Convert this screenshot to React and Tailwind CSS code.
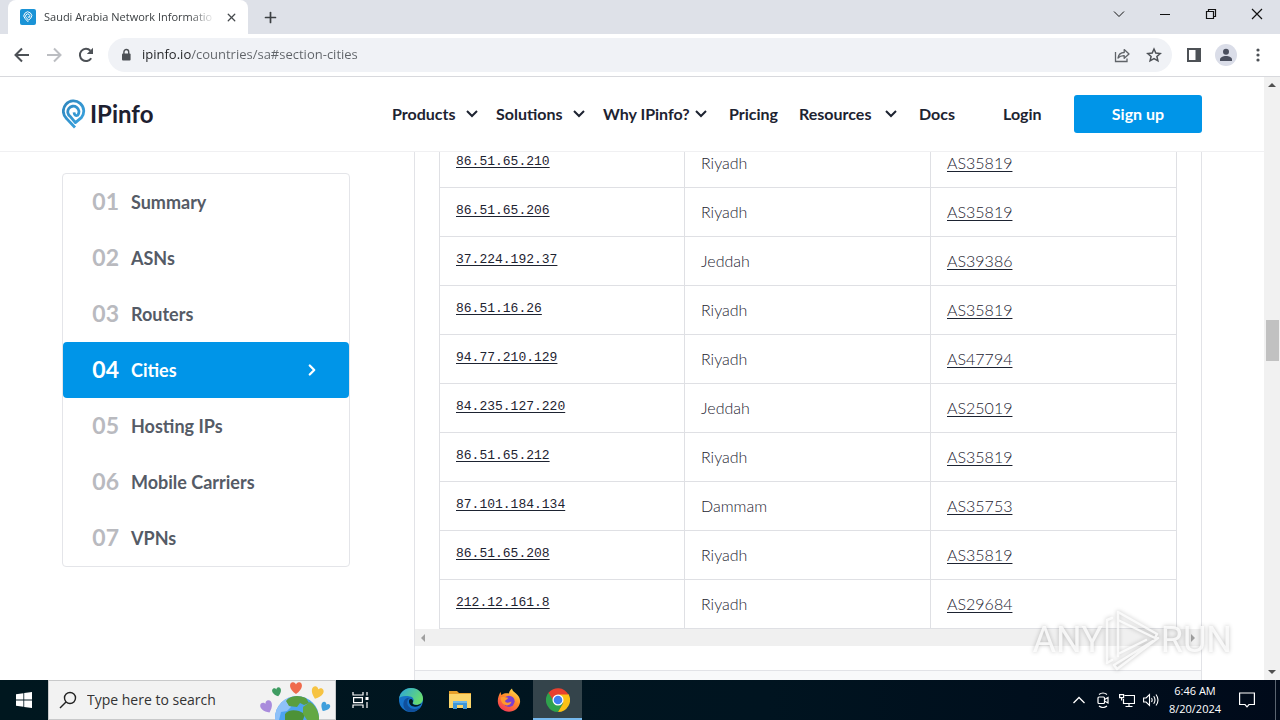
import { useState } from 'react';
import { ChevronRight, Plus, X } from 'lucide-react';

const NAV = [
    { label: 'Products', menu: true, size: 'w-[104px] pr-[18px]' },
    { label: 'Solutions', menu: true, size: 'w-[107px] pr-[18px]' },
    { label: 'Why IPinfo?', menu: true, size: 'w-[126px] pr-[22px]' },
    { label: 'Pricing', menu: false, size: 'w-[70px]' },
    { label: 'Resources', menu: true, size: 'w-[120px] pr-[22px]' },
    { label: 'Docs', menu: false, size: 'w-[84px]' },
    { label: 'Login', menu: false, size: 'w-[71px]' },
];

const SECTIONS = ['Summary', 'ASNs', 'Routers', 'Cities', 'Hosting IPs', 'Mobile Carriers', 'VPNs'];

const ROWS = [
    { ip: '86.51.65.210', city: 'Riyadh', asn: 'AS35819' },
    { ip: '86.51.65.206', city: 'Riyadh', asn: 'AS35819' },
    { ip: '37.224.192.37', city: 'Jeddah', asn: 'AS39386' },
    { ip: '86.51.16.26', city: 'Riyadh', asn: 'AS35819' },
    { ip: '94.77.210.129', city: 'Riyadh', asn: 'AS47794' },
    { ip: '84.235.127.220', city: 'Jeddah', asn: 'AS25019' },
    { ip: '86.51.65.212', city: 'Riyadh', asn: 'AS35819' },
    { ip: '87.101.184.134', city: 'Dammam', asn: 'AS35753' },
    { ip: '86.51.65.208', city: 'Riyadh', asn: 'AS35819' },
    { ip: '212.12.161.8', city: 'Riyadh', asn: 'AS29684' },
];

const PIN = 'M13 28.5 L4.6 19.6 A10.2 10.2 0 1 1 19.4 18.6 L13.4 23.6 L8.2 17.4 A5.6 5.6 0 1 1 15.8 16.2 Q12.6 17.6 12 13.4';

function TabStrip() {
    return (
        <div className="flex h-[34px] shrink-0 items-end bg-[#dee1e8] pl-2">
            <div className="flex h-[34px] w-60 items-center rounded-t-lg bg-white pl-3 pr-2">
                <svg viewBox="0 0 16 16" className="size-4 shrink-0">
                    <rect width="16" height="16" rx="2" fill="#1a93d6" />
                    <g transform="translate(3.4 2.2) scale(0.38)">
                        <path d={PIN} fill="none" stroke="#fff" strokeWidth="2.6" />
                    </g>
                </svg>
                <span className="ml-2 w-[171px] whitespace-nowrap text-[11px] text-[#3c4043] [mask-image:linear-gradient(90deg,#000_85%,transparent)]">Saudi Arabia Network Informatio</span>
                <button aria-label="Close tab" className="ml-2 flex size-4 items-center justify-center text-[#45494d]">
                    <X size={13} strokeWidth={2.4} />
                </button>
            </div>
            <button aria-label="New tab" className="ml-3 flex h-[34px] w-5 items-center justify-center text-[#3c4043]">
                <Plus size={17} strokeWidth={2.4} />
            </button>
            <div className="ml-auto flex h-7 self-start text-[#111]">
                <button aria-label="Search tabs" className="flex w-[46px] items-center justify-center">
                    <svg viewBox="0 0 12 12" className="size-3" fill="none" stroke="currentColor"><path d="M1 3.5l5 5 5-5" /></svg>
                </button>
                <button aria-label="Minimize" className="flex w-[46px] items-center justify-center">
                    <svg viewBox="0 0 12 12" className="size-3" stroke="currentColor"><path d="M1 6.5h10" /></svg>
                </button>
                <button aria-label="Restore" className="flex w-[46px] items-center justify-center">
                    <svg viewBox="0 0 12 12" className="size-3" fill="none" stroke="currentColor" strokeWidth="1.2"><path d="M1.5 3.5h7v7h-7zM3.5 3.5v-2h7v7h-2" /></svg>
                </button>
                <button aria-label="Close" className="flex w-[46px] items-center justify-center">
                    <svg viewBox="0 0 12 12" className="size-3" stroke="currentColor" strokeWidth="1.2"><path d="M1 1l10 10M11 1L1 11" /></svg>
                </button>
            </div>
        </div>
    );
}

function Toolbar() {
    return (
        <div className="flex h-[43px] shrink-0 items-center border-b border-[#d8d9dd] bg-white pl-3 text-[#5f6368]">
            <button aria-label="Back" className="flex size-5 items-center justify-center">
                <svg viewBox="0 0 16 16" className="size-4" fill="none" stroke="#4d5156" strokeWidth="2"><path d="M15 8H2M8 1.5L1.5 8 8 14.5" /></svg>
            </button>
            <button aria-label="Forward" className="ml-3 flex size-5 items-center justify-center">
                <svg viewBox="0 0 16 16" className="size-4" fill="none" stroke="#bcbec2" strokeWidth="2"><path d="M1 8h13M8 1.5L14.5 8 8 14.5" /></svg>
            </button>
            <button aria-label="Reload" className="ml-3 flex size-5 items-center justify-center">
                <svg viewBox="0 0 16 16" className="size-4" fill="none"><path d="M13.2 11.2A6.1 6.1 0 1 1 12.4 3.7" stroke="#4d5156" strokeWidth="2" /><path d="M15 .8V7H8.8z" fill="#4d5156" /></svg>
            </button>
            <div className="ml-3 flex h-[34px] flex-1 items-center rounded-full bg-[#f0f2f6] pl-3 pr-0.5">
                <svg viewBox="0 0 12 14" className="h-3.5 w-3" fill="none"><rect x="2" y="5.5" width="8.6" height="7" rx="1" fill="#4d5156" /><path d="M3.9 6V3.9a2.4 2.4 0 0 1 4.8 0V6" stroke="#4d5156" strokeWidth="1.4" /></svg>
                <input aria-label="Address" defaultValue="ipinfo.io/countries/sa#section-cities"
                    className="ml-2.5 flex-1 bg-[linear-gradient(90deg,#202124_49px,#5f6368_49px)] bg-clip-text text-[13px] text-transparent outline-none" />
                <button aria-label="Share" className="flex size-8 items-center justify-center">
                    <svg viewBox="0 0 16 16" className="size-4" fill="none" stroke="currentColor" strokeWidth="1.3"><path d="M1.5 5v9.5h11.5v-3" /><path d="M4 11c.6-3.6 2.8-5.4 6.2-5.5V2.6L15 7l-4.8 4.3V8.6C7.5 8.5 5.5 9.3 4 11z" strokeLinejoin="round" /></svg>
                </button>
                <button aria-label="Bookmark this tab" className="flex size-8 items-center justify-center">
                    <svg viewBox="0 0 16 16" className="size-4" fill="none" stroke="#4d5156" strokeWidth="1.5"><path d="M8 2l1.8 4.1 4.4.4-3.3 2.9 1 4.4L8 11.5l-3.9 2.3 1-4.4L1.8 6.5l4.4-.4z" /></svg>
                </button>
            </div>
            <button aria-label="Side panel" className="ml-1.5 flex size-8 items-center justify-center">
                <svg viewBox="0 0 16 16" className="size-4"><path fill="#4d5156" fillRule="evenodd" d="M1 1h14v14H1zM3 3v10h6.500V3z" /></svg>
            </button>
            <button aria-label="Profile" className="flex size-8 items-center justify-center">
                <svg viewBox="0 0 22 22" className="size-[22px]"><circle cx="11" cy="11" r="11" fill="#dadde8" /><circle cx="11" cy="7.7" r="3" fill="#4a4f5e" /><path d="M5 17v-1.500c0-2.400 3-3.600 6-3.600s6 1.200 6 3.600V17z" fill="#4a4f5e" /></svg>
            </button>
            <button aria-label="Menu" className="mr-1.5 flex size-8 items-center justify-center">
                <svg viewBox="0 0 4 14" className="h-3.5 w-1" fill="#4d5156"><circle cx="2" cy="2" r="1.6" /><circle cx="2" cy="7" r="1.6" /><circle cx="2" cy="12" r="1.6" /></svg>
            </button>
        </div>
    );
}

function SiteHeader() {
    return (
        <header className="h-[75px] shrink-0 border-b border-[#f0f0f2] bg-white">
            <div className="mx-auto flex h-full max-w-[1140px] items-center">
                <a href="#home" className="flex items-center text-[#1d2030]">
                    <svg viewBox="0 0 24 30" className="h-[30px] w-6" fill="none">
                        <defs>
                            <linearGradient id="pin" x1="0" y1="0" x2="1" y2="1">
                                <stop offset="0" stopColor="#2f86bd" />
                                <stop offset="1" stopColor="#3aa5e2" />
                            </linearGradient>
                        </defs>
                        <path d={PIN} stroke="url(#pin)" strokeWidth="2.800" strokeLinejoin="round" />
                    </svg>
                    <span className="ml-1 text-2xl font-bold">IPinfo</span>
                </a>
                <nav className="ml-auto flex items-center text-base font-bold">
                    {NAV.map(n => (
                        <a key={n.label} href={`#${n.label}`} className={`flex items-center justify-between whitespace-nowrap ${n.size}`}>
                            {n.label}
                            {n.menu && <svg viewBox="0 0 12 8" className="h-2 w-3" fill="none" stroke="currentColor" strokeWidth="2"><path d="M1 1l5 5 5-5" /></svg>}
                        </a>
                    ))}
                    <a href="#signup" className="flex h-[38px] w-32 items-center justify-center rounded-[3px] bg-[#0095e8] text-white">Sign up</a>
                </nav>
            </div>
        </header>
    );
}

function SectionMenu() {
    const [active, setActive] = useState('Cities');

    return (
        <nav className="mt-[21px] w-72 shrink-0 self-start rounded border border-[#e4e5e9] text-lg font-bold">
            {SECTIONS.map((name, i) => (
                <a key={name} href={`#section-${name}`} onClick={() => setActive(name)}
                    className={`flex h-14 items-center rounded pr-7 ${active === name ? 'bg-[#0095e8] text-white' : 'text-[#555b66]'}`}>
                    <span className={`w-14 text-right text-[23px] ${active === name ? '' : 'text-[#b9babf]'}`}>0{i + 1}</span>
                    <span className="ml-3">{name}</span>
                    {active === name && <ChevronRight size={18} strokeWidth={3} className="ml-auto" />}
                </a>
            ))}
        </nav>
    );
}

function IpTable() {
    return (
        <section className="flex min-w-0 flex-1 flex-col border-x border-[#e2e3e7]">
            {/* scrolled a little under the header */}
            <div className="-mt-[13px] px-6">
                <table className="w-full table-fixed border-separate border-spacing-0">
                    <tbody>
                        {ROWS.map(r => (
                            <tr key={r.ip} className="h-[49px] [&>td]:border-b [&>td]:border-r [&>td]:border-[#dfe0e4] [&>td]:px-4">
                                <td className="border-l pb-0.5 font-['Liberation_Mono',monospace] text-[13px]"><a href={`#${r.ip}`} className="underline underline-offset-2">{r.ip}</a></td>
                                <td className="text-base font-light">{r.city}</td>
                                <td className="text-base font-light"><a href={`#${r.asn}`} className="underline underline-offset-2">{r.asn}</a></td>
                            </tr>
                        ))}
                    </tbody>
                </table>
            </div>
            <div className="flex h-[17px] items-center justify-between bg-[#f0f0f0] px-1.5">
                <svg viewBox="0 0 4 8" className="h-2 w-1"><path d="M4 0v8L0 4z" fill="#a0a0a0" /></svg>
                <svg viewBox="0 0 4 8" className="h-2 w-1"><path d="M0 0v8l4-4z" fill="#a0a0a0" /></svg>
            </div>
            <div className="mt-6 flex-1 border-t border-[#e2e3e7] bg-[#f8f9fa]" />
        </section>
    );
}

function PageScrollbar() {
    return (
        <div className="flex w-4 shrink-0 flex-col items-center bg-[#f1f1f1] py-1.5">
            <svg viewBox="0 0 8 4" className="h-1 w-2"><path d="M0 4h8L4 0z" fill="#505050" /></svg>
            <div className="flex-[232]" />
            <div className="h-[41px] w-[13px] bg-[#c1c1c1]" />
            <div className="flex-[307]" />
            <svg viewBox="0 0 8 4" className="h-1 w-2"><path d="M0 0h8L4 4z" fill="#505050" /></svg>
        </div>
    );
}

function Watermark() {
    return (
        <div className="pointer-events-none absolute bottom-2 right-12 flex h-16 items-center font-['Roboto',sans-serif] text-4xl text-white/80 [filter:drop-shadow(0_0_2px_rgba(0,0,0,0.3))]">
            <span>ANY</span>
            <svg viewBox="0 0 58 64" className="h-16 w-[58px]" fill="none" stroke="currentColor" strokeWidth="2.5" strokeLinejoin="round" strokeLinecap="round">
                <path d="M9 10L4 12v43l5-3M15 48V4l39 22-2 4L15 12M55 30L14 61l-3-4L50 33M15 46l28-14" />
            </svg>
            <span>RUN</span>
        </div>
    );
}

function Globe() {
    return (
        <svg viewBox="0 0 72 40" className="h-10 w-[72px] shrink-0">
            <defs>
                <clipPath id="world"><circle cx="38" cy="38" r="22" /></clipPath>
                <path id="heart" d="M0 5C-6 1-6-4-3-4.8-1.500-5.200-.4-4 0-3 .4-4 1.500-5.200 3-4.800 6-4 6 1 0 5z" />
            </defs>
            <circle cx="38" cy="38" r="22" fill="#4da3f0" />
            <g clipPath="url(#world)">
                <path d="M14 40l1-12 7-9 9-4-3 7 4 5-4 4-6 1-2 8z" fill="#8fc1f8" />
                <path d="M27 21c5-7 16-6 20-3l3 5-5 2-4-2-3 4-8-1z" fill="#5a9e3f" />
                <path d="M26 34c4-5 10-4 14-3l6 3-2 6H26z" fill="#4d9237" />
                <path d="M44 27l7-5c5 3 8 8 9 14v4H48l-4-6z" fill="#63a843" />
            </g>
            <use href="#heart" transform="translate(37 8) scale(1.200)" fill="#ef6a4c" />
            <use href="#heart" transform="translate(18 12) rotate(-15) scale(.9)" fill="#3f9c62" />
            <use href="#heart" transform="translate(58 13) rotate(20) scale(1.200)" fill="#f6c342" />
            <use href="#heart" transform="translate(8 27) rotate(-25) scale(1.200)" fill="#a98bdc" />
            <use href="#heart" transform="translate(66 27) rotate(30) scale(.9)" fill="#3f9fdc" />
        </svg>
    );
}

function EdgeIcon() {
    return (
        <svg viewBox="0 0 24 24" className="size-6">
            <defs>
                <linearGradient id="edgeTop" x1="0" y1="0" x2="1" y2=".5">
                    <stop offset="0" stopColor="#2aa4de" />
                    <stop offset="1" stopColor="#67dc70" />
                </linearGradient>
            </defs>
            <circle cx="12" cy="12" r="12" fill="#1572c8" />
            <path d="M0 11C1 4 6 0 12 0c7 0 12 5 12 10.500 0 4-3 6.300-6.500 6.300-3 0-4.200-1.300-3.500-2.300 1.500-2 .5-5.500-3-6C6 7.500 1 8 0 11z" fill="url(#edgeTop)" />
            <path d="M9 11.500c-2.500 5 1.500 9.500 6.500 9.500 3 0 5.200-1 6.800-2.500C20 22 16 24 12 24 6 24 3 18 5 13c1-2.300 3.500-3.700 6-3-1 .2-1.600.8-2 1.500z" fill="#10509c" />
            <path d="M10 13c0-2 3-3 4 0 0 1.500-.8 2-.3 2.800 1.500 2 6.500 1.300 8.800-.6-1.500 4.300-12.500 5.600-12.500-2.200z" fill="#021a22" />
        </svg>
    );
}

function FirefoxIcon() {
    return (
        <svg viewBox="0 0 24 24" className="size-6">
            <defs>
                <linearGradient id="fox" x1=".8" y1="0" x2=".2" y2="1">
                    <stop offset="0" stopColor="#ffe14a" />
                    <stop offset=".45" stopColor="#ff8a2a" />
                    <stop offset="1" stopColor="#f5315a" />
                </linearGradient>
            </defs>
            <path d="M3.500 4l.8 3L7 5.500C9 5 11 5 12 5.500c0-2 1.500-4 3-5 .2 2.500 2 3.200 4 5C22 8 23.500 11 23 14.500 22 20 17.500 23.800 12 23.800S1 19.500.8 13.500C.7 10 2 6.500 3.500 4z" fill="url(#fox)" />
            <circle cx="12" cy="13.300" r="5.600" fill="#7a3fd0" />
            <path d="M3.500 9.500c3-1.200 5 0 7.500.2-.2 2-2.500 1.800-3 3.300.8 2.600 4.500 1.600 6.500.6-.5 3.400-4.500 4.800-7.500 3C5 15.500 3.500 12.500 3.500 9.500z" fill="#ff9a2e" />
        </svg>
    );
}

function ChromeIcon() {
    return (
        <svg viewBox="0 0 24 24" className="size-6">
            <path d="M1.600 6A12 12 0 0 0 12 24l5.200-9L12 12V6z" fill="#2fa24c" />
            <path d="M22.400 6A12 12 0 0 1 12 24l5.200-9L12 6z" fill="#fbc116" />
            <path d="M2.500 4.700A12 12 0 0 1 22.400 6.500H12A5.500 5.500 0 0 0 6.800 10z" fill="#e8402f" />
            <path d="M1.600 6L6.800 15 9 8 2.500 4.700z" fill="#2fa24c" />
            <path d="M2.500 4.700L7 12l5-6z" fill="#e8402f" />
            <circle cx="12" cy="12" r="5.500" fill="#fff" />
            <circle cx="12" cy="12" r="4.300" fill="#3f7ff0" />
        </svg>
    );
}

function Taskbar() {
    return (
        <footer className="flex h-10 shrink-0 items-center bg-[linear-gradient(90deg,#00171f,#001420_60%,#000a1a)] text-white">
            <button aria-label="Start" className="flex h-10 w-12 items-center justify-center">
                <svg viewBox="0 0 16 16" className="size-4" fill="#fff"><path d="M0 2.300L7.400 1.200V7.600H0zM8.200 1.100L16 0v7.600H8.200zM0 8.400h7.400v6.400L0 13.700zM8.200 8.400H16V16l-7.800-1.100z" /></svg>
            </button>
            <label className="flex h-10 w-72 items-center border border-[#c8c9ca] bg-[#f2f2f2] pl-2.5 pr-1 text-[#222]">
                <svg viewBox="0 0 18 18" className="size-[18px] shrink-0" fill="none" stroke="#222" strokeWidth="1.400"><circle cx="11" cy="7" r="5.500" /><path d="M7 11l-6 6" /></svg>
                <input aria-label="Search" placeholder="Type here to search" className="ml-2.5 min-w-0 flex-1 text-sm outline-none placeholder:text-[#333]" />
                <Globe />
            </label>
            <button aria-label="Task view" className="flex h-10 w-[50px] items-center justify-center">
                <svg viewBox="0 0 18 18" className="size-[18px]" fill="none" stroke="#fff" strokeWidth="1.200"><path d="M1 1v3h10V1M1 17v-3h10v3M1.600 6.600h8.800v5H1.600zM15 1v3.500M15 11v6" /><path d="M13.500 6h3v3h-3z" fill="#fff" stroke="none" /></svg>
            </button>
            <button aria-label="Edge" className="flex h-10 w-[49px] items-center justify-center"><EdgeIcon /></button>
            <button aria-label="File Explorer" className="flex h-10 w-[49px] items-center justify-center">
                <svg viewBox="0 0 22 20" className="h-5 w-[22px]"><path d="M0 1h8l2 2h12v3H0z" fill="#e6a02a" /><path d="M0 4h22v14H0z" fill="#fbd56a" /><path d="M4 11h14v8h-4v-4H8v4H4z" fill="#3f97d8" /><path d="M4 11h14v2H4z" fill="#6fb8ea" /></svg>
            </button>
            <button aria-label="Firefox" className="flex h-10 w-[49px] items-center justify-center"><FirefoxIcon /></button>
            <button aria-label="Chrome" className="flex h-10 w-[49px] items-center justify-center border-b-2 border-[#76b9ed] bg-[#34444b] pt-0.5"><ChromeIcon /></button>
            <div className="ml-auto flex h-10 items-center text-[11px]">
                <div className="flex h-10">
                    <button aria-label="Hidden icons" className="flex w-6 items-center justify-center">
                        <svg viewBox="0 0 12 8" className="h-2 w-3" fill="none" stroke="#fff" strokeWidth="1.300"><path d="M.5 7L6 1.500 11.500 7" /></svg>
                    </button>
                    <button aria-label="Meet now" className="flex w-6 items-center justify-center">
                        <svg viewBox="0 0 16 16" className="size-4" fill="none" stroke="#fff" strokeWidth="1.200"><rect x="3" y="5" width="6.500" height="6.500" rx="1" /><path d="M9.500 7.500L13 5.500v5.500l-3.500-2M4 2.500q4-3 8 0M4 14q4 3 8 0" /></svg>
                    </button>
                    <button aria-label="Network" className="flex w-6 items-center justify-center">
                        <svg viewBox="0 0 16 16" className="size-4" fill="none" stroke="#fff" strokeWidth="1.200"><path d="M5.500 3.500h10v8h-11V7M10 11.500v3M6.500 14.500h7M.6 2.600h4v3h-4zM2.600 5.600v3" /></svg>
                    </button>
                    <button aria-label="Volume" className="flex w-6 items-center justify-center">
                        <svg viewBox="0 0 16 16" className="size-4" fill="none" stroke="#fff" strokeWidth="1.100"><path d="M.6 6h2.500L6.500 2.500v11L3.100 10H.6zM8.500 6q1.300 2 0 4M10.700 4.300q2.600 3.700 0 7.400M13 2.500q4 5.500 0 11" /></svg>
                    </button>
                </div>
                <div className="w-16 text-center leading-[18px]">
                    <div>6:46 AM</div>
                    <div>8/20/2024</div>
                </div>
                <button aria-label="Notifications" className="flex h-10 w-10 items-center justify-center">
                    <svg viewBox="0 0 16 16" className="size-4" fill="none" stroke="#fff" strokeWidth="1.200"><path d="M.6 1h14.800v11.500H10L8 14.800 6 12.500H.6z" /></svg>
                </button>
                <div className="ml-2 h-10 w-[5px] border-l border-[#5a6470]" />
            </div>
        </footer>
    );
}

export default function App() {
    return (
        <div className="flex h-screen flex-col overflow-hidden bg-white font-['Open_Sans',sans-serif]">
            <TabStrip />
            <Toolbar />
            <div className="relative flex min-h-0 flex-1">
                <div className="flex min-w-0 flex-1 flex-col font-[Lato,sans-serif] text-[#1d2331]">
                    <SiteHeader />
                    <main className="min-h-0 flex-1 overflow-hidden">
                        <div className="mx-auto flex h-full max-w-[1140px] gap-16">
                            <SectionMenu />
                            <IpTable />
                        </div>
                    </main>
                </div>
                <PageScrollbar />
                <Watermark />
            </div>
            <Taskbar />
        </div>
    );
}
